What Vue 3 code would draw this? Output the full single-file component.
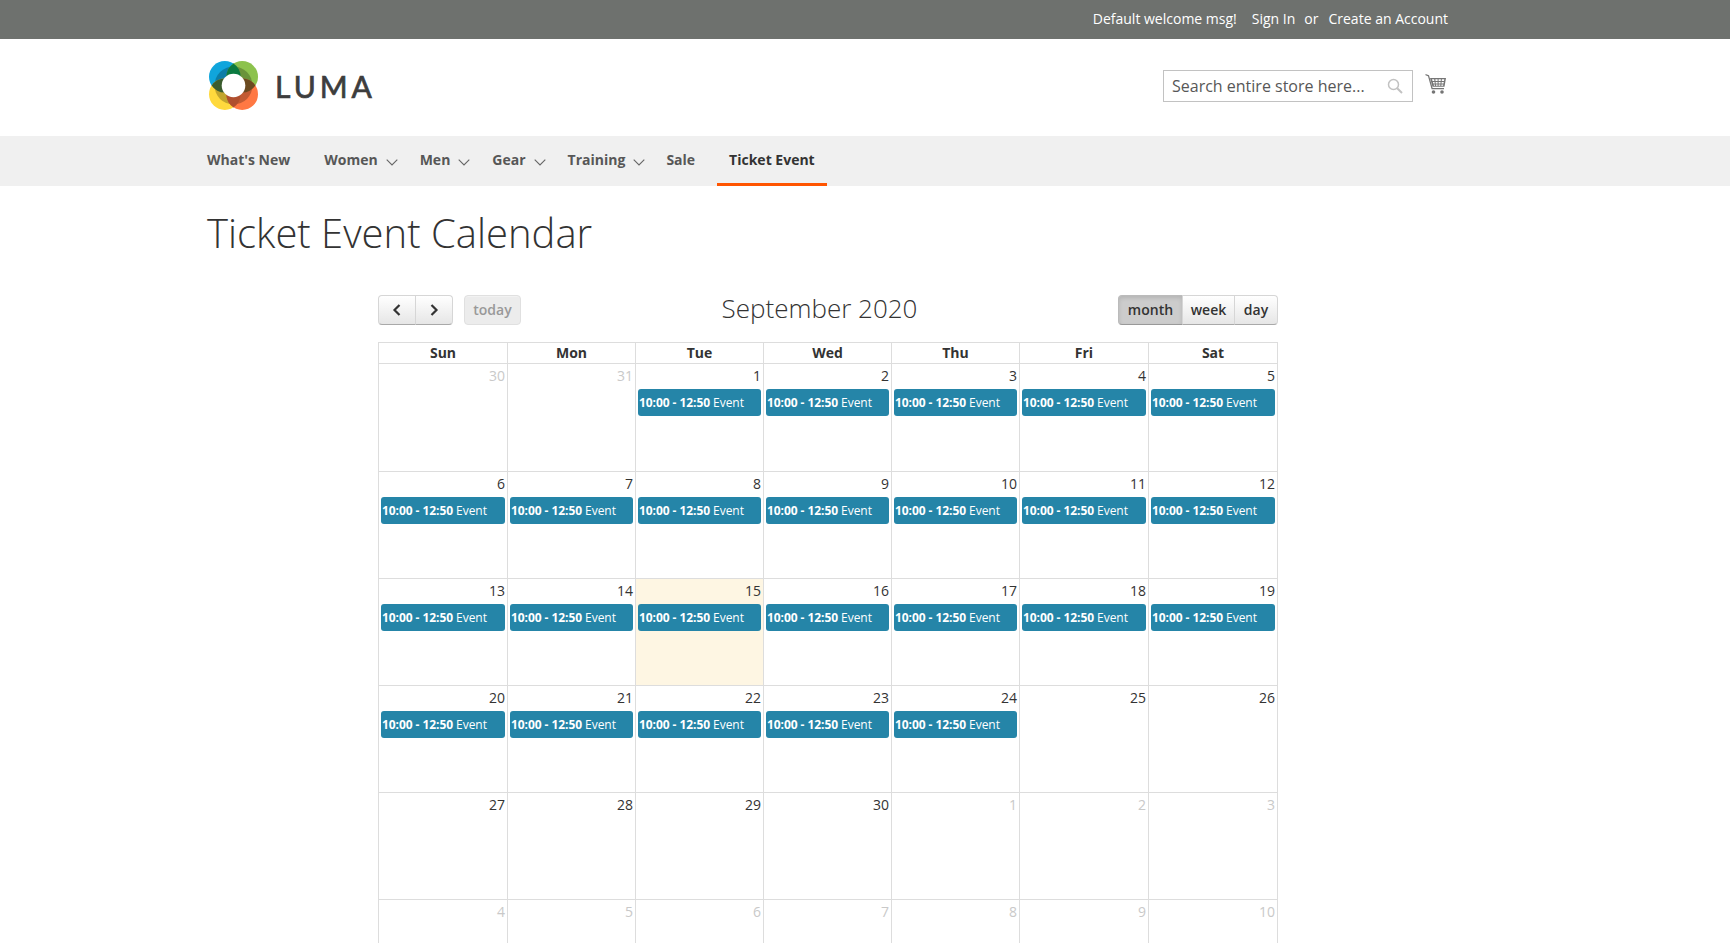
<script setup>
const nav = [
  { label: "What's New" },
  { label: 'Women', more: true },
  { label: 'Men', more: true },
  { label: 'Gear', more: true },
  { label: 'Training', more: true },
  { label: 'Sale' },
  { label: 'Ticket Event', active: true },
]
const days = ['Sun', 'Mon', 'Tue', 'Wed', 'Thu', 'Fri', 'Sat']
const colWidths = [129, 128, 128, 128, 128, 129, 129]

const cells = []
for (const d of [30, 31]) cells.push({ d, other: true })
for (let d = 1; d <= 30; d++) cells.push({ d, event: d <= 24, now: d === 15 })
for (let d = 1; d <= 10; d++) cells.push({ d, other: true })
const weeks = []
for (let i = 0; i < cells.length; i += 7) weeks.push(cells.slice(i, i + 7))
</script>

<template>
  <div class="page">
    <div class="topbar">
      <div class="wrap topbar-in">
        <span>Default welcome msg!</span>
        <a>Sign In</a>
        <span class="or">or</span>
        <a>Create an Account</a>
      </div>
    </div>

    <header class="wrap head">
      <div class="logo">
        <svg class="mark" width="50" height="50" viewBox="0 0 50 50">
          <circle cx="15.800" cy="15.800" r="15.800" fill="#10a5dc" />
          <circle cx="33.200" cy="15.800" r="15.800" fill="#8cc24d" />
          <circle cx="15.800" cy="33.200" r="15.800" fill="#ffd93d" />
          <circle cx="33.200" cy="33.200" r="15.800" fill="#ff7843" />
          <circle cx="24.500" cy="24.500" r="19" fill="#000" opacity=".24" />
          <path d="M24.500 2.600A15.800 15.800 0 0 1 24.500 29 15.800 15.800 0 0 1 24.500 2.600Z" fill="#0b7a40" />
          <path d="M2.600 24.500A15.800 15.800 0 0 1 29 24.500 15.800 15.800 0 0 1 2.600 24.500Z" fill="#3a5c2e" />
          <path d="M20 24.500A15.800 15.800 0 0 1 46.400 24.500 15.800 15.800 0 0 1 20 24.500Z" fill="#6b4a20" />
          <path d="M24.500 20A15.800 15.800 0 0 1 24.500 46.400 15.800 15.800 0 0 1 24.500 20Z" fill="#b0502f" />
          <circle cx="24.500" cy="24.500" r="11.800" fill="#fff" />
        </svg>
        <span class="word">LUMA</span>
      </div>
      <div class="tools">
        <div class="search">
          <span class="ph">Search entire store here...</span>
          <svg width="16" height="16" viewBox="0 0 16 16" fill="none" stroke="#c2c2c2">
            <circle cx="6.500" cy="6.500" r="5" stroke-width="1.500" />
            <path d="M10.200 10.200 15 15" stroke-width="2" />
          </svg>
        </div>
        <svg class="cart" width="22" height="22" viewBox="0 0 22 22" fill="#757575">
          <path d="M0.500 1 L4 2.200 L7.600 15 L19 15 V16.300 H6.600 L3 3.200 L0.500 2.300 Z" />
          <path d="M5 5 H21 L19.500 13.700 H7.500 Z M7 6.200 L7.500 8 H9.400 L9.200 6.200 Z M10.400 6.200 L10.500 8 H12.600 V6.200 Z M13.600 6.200 V8 H15.700 L15.900 6.200 Z M16.900 6.200 L16.700 8 H19 L19.300 6.200 Z M7.900 9 L8.300 10.500 H9.800 L9.600 9 Z M10.600 9 L10.700 10.500 H12.600 V9 Z M13.600 9 V10.500 H15.500 L15.600 9 Z M16.600 9 L16.500 10.500 H18.500 L18.800 9 Z M8.600 11.500 L9 12.700 H10 L9.900 11.500 Z M10.900 11.500 L11 12.700 H12.600 V11.500 Z M13.600 11.500 V12.700 H15.300 L15.400 11.500 Z M16.400 11.500 L16.300 12.700 H18.100 L18.300 11.500 Z" fill-rule="evenodd" />
          <circle cx="8.500" cy="19" r="1.800" />
          <circle cx="17" cy="19" r="1.800" />
        </svg>
      </div>
    </header>

    <nav class="navbar">
      <ul class="wrap nav-in">
        <li v-for="n in nav" :key="n.label" class="nav-item" :class="{ active: n.active, more: n.more }">
          <span>{{ n.label }}</span>
          <svg v-if="n.more" class="chev" width="12" height="7" viewBox="0 0 12 7" fill="none" stroke="#666" stroke-width="1.100">
            <path d="M0.700 0.700 6 6 11.300 0.700" />
          </svg>
        </li>
      </ul>
    </nav>

    <main class="wrap">
      <h1 class="title">Ticket Event Calendar</h1>

      <section class="cal">
        <div class="toolbar">
          <div class="left">
            <div class="group">
              <button class="btn arrow first">
                <svg width="10" height="12" viewBox="0 0 10 12" fill="none" stroke="#333" stroke-width="2.200"><path d="M7.500 1 2.500 6l5 5" /></svg>
              </button>
              <button class="btn arrow last">
                <svg width="10" height="12" viewBox="0 0 10 12" fill="none" stroke="#333" stroke-width="2.200"><path d="M2.500 1l5 5-5 5" /></svg>
              </button>
            </div>
            <button class="btn btn-today">today</button>
          </div>
          <h2 class="month">September 2020</h2>
          <div class="group">
            <button class="btn v-month first on">month</button>
            <button class="btn v-week">week</button>
            <button class="btn v-day last">day</button>
          </div>
        </div>

        <table class="grid">
          <colgroup>
            <col v-for="(w, i) in colWidths" :key="i" :style="{ width: w + 'px' }" />
          </colgroup>
          <thead>
            <tr><th v-for="d in days" :key="d">{{ d }}</th></tr>
          </thead>
          <tbody>
            <tr v-for="(w, i) in weeks" :key="i">
              <td v-for="c in w" :key="c.d + '-' + c.other" :class="{ now: c.now }">
                <div class="num" :class="{ other: c.other }">{{ c.d }}</div>
                <div v-if="c.event" class="event"><b>10:00 - 12:50</b> Event</div>
              </td>
            </tr>
          </tbody>
        </table>
      </section>
    </main>
  </div>
</template>

<style>
html, body { margin: 0; overflow: hidden; background: #fff; }
</style>

<style scoped>
.page {
  height: 943px;
  overflow: hidden;
  font-family: "Open Sans", "Liberation Sans", sans-serif;
  font-size: 14px;
  color: #333;
}
.wrap {
  box-sizing: border-box;
  width: 1280px;
  margin-left: 187px;
  padding: 0 20px;
}
.topbar {
  height: 39px;
  background: #6e716e;
  color: #fff;
}
.topbar-in {
  height: 39px;
  display: flex;
  justify-content: flex-end;
  align-items: center;
  gap: 15px;
  padding-right: 19px;
  padding-bottom: 2px;
}
.topbar-in .or { margin: 0 -5px 0 -6px; }
.head {
  height: 97px;
  display: flex;
  justify-content: space-between;
  align-items: center;
  padding-right: 19px;
  padding-bottom: 4px;
}
.logo {
  display: flex;
  align-items: center;
  margin-left: 2px;
  gap: 16px;
}
.mark { display: block; margin-top: 1px; }
.word {
  font-family: "Lato", "Open Sans", sans-serif;
  font-weight: 400;
  font-size: 30px;
  letter-spacing: 4px;
  -webkit-text-stroke: 0.7px #3d3d3d;
  color: #3d3d3d;
}
.tools {
  display: flex;
  align-items: center;
  gap: 12px;
}
.search {
  box-sizing: border-box;
  width: 250px;
  height: 32px;
  border: 1px solid #c2c2c2;
  display: flex;
  align-items: center;
  justify-content: space-between;
  padding: 0 9px 0 8px;
  font-size: 16px;
  color: #575757;
  background: #fff;
}
.cart { display: block; margin: -3px 1px 0 0; }
.navbar { height: 50px; background: #f0f0f0; }
.nav-in {
  list-style: none;
  margin-top: 0;
  margin-bottom: 0;
  height: 50px;
  display: flex;
  gap: 10px;
  padding-left: 8px;
}
.nav-item {
  box-sizing: border-box;
  height: 50px;
  line-height: 47px;
  padding: 0 12px;
  font-weight: 700;
  color: #575757;
  white-space: nowrap;
}
.nav-item.more { padding-right: 0; }
.nav-item.more:nth-child(5) { margin-right: -1px; }
.nav-item.active { color: #333; border-bottom: 3px solid #ff5501; }
.chev { display: inline-block; margin-left: 8px; vertical-align: -1px; }
.title {
  margin: 21px 0 0;
  font-size: 40px;
  font-weight: 300;
  line-height: 52px;
  color: #333;
}
.cal {
  width: 900px;
  margin: 0 0 0 171px;
  padding-top: 36px;
}
.toolbar {
  display: flex;
  justify-content: space-between;
  align-items: center;
  height: 30px;
  margin-bottom: 17px;
}
.left { display: flex; gap: 12px; }
.group { display: flex; }
.btn {
  box-sizing: border-box;
  height: 30px;
  margin: 0;
  padding: 0 0 2px;
  font: 600 14px "Open Sans", "Liberation Sans", sans-serif;
  color: #333;
  background: linear-gradient(#fff, #e6e6e6);
  border: 1px solid #d6d6d6;
  border-bottom-color: #a9a9a9;
  margin-left: -1px;
  display: flex;
  align-items: center;
  justify-content: center;
  box-shadow: inset 0 1px 0 rgba(255,255,255,.3);
}
.first { border-radius: 4px 0 0 4px; margin-left: 0; }
.last { border-radius: 0 4px 4px 0; }
.arrow { width: 38px; padding-bottom: 0; }
.btn-today {
  width: 57px;
  border-radius: 4px;
  color: #999;
  background: #ececec;
  border-color: #e0e0e0;
}
.v-month { width: 65px; }
.v-week { width: 53px; }
.v-day { width: 44px; }
.on {
  background: #ccc;
  border-color: #bbb;
  border-bottom-color: #999;
  box-shadow: inset 0 2px 4px rgba(0,0,0,.12);
}
.month {
  margin: 0 0 4px;
  font-size: 26px;
  font-weight: 300;
  color: #333;
}
.grid {
  table-layout: fixed;
  width: 899px;
  border-collapse: collapse;
}
.grid th, .grid td {
  border: 1px solid #ddd;
  padding: 0;
  vertical-align: top;
}
.grid th { height: 20px; font-size: 14px; font-weight: 700; line-height: 20px; text-align: center; }
.grid td { height: 106px; }
.grid tbody tr:first-child td { height: 107px; }
.grid td.now { background: #fef6e3; }
.num {
  height: 25px;
  line-height: 23px;
  padding-right: 2px;
  text-align: right;
  font-size: 14px;
}
.num.other { color: #c9c9c9; }
.event {
  box-sizing: border-box;
  height: 27px;
  margin: 0 2px;
  padding-left: 1px;
  line-height: 27px;
  font-size: 12px;
  letter-spacing: -0.06px;
  color: #fff;
  background: #2585a8;
  border-radius: 3px;
  white-space: nowrap;
  overflow: hidden;
}
</style>
